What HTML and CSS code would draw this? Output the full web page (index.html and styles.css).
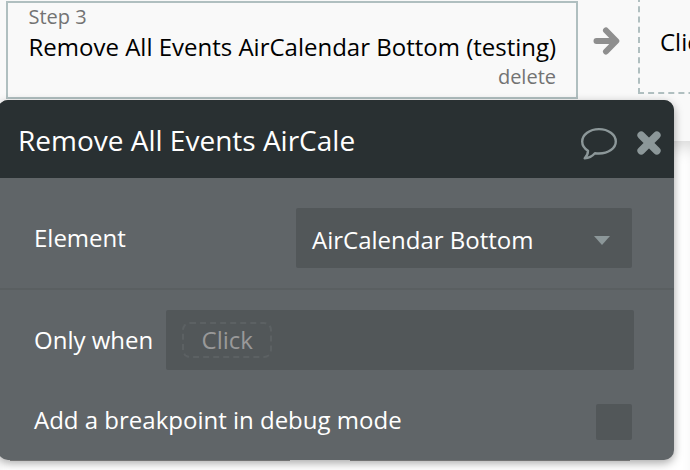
FILE: index.html
```
<!DOCTYPE html>
<html lang="en">

<head>
    <meta charset="UTF-8">
    <meta name="viewport" content="width=device-width, initial-scale=1.0">
    <title>Workflow</title>
    <link rel="stylesheet" href="styles.css">
</head>

<body>
    <div class="workflow">
        <div class="step">
            <div class="step-number">Step 3</div>
            <div class="step-name">Remove All Events AirCalendar Bottom (testing)</div>
            <div class="step-delete">delete</div>
        </div>
        <svg class="arrow" width="28" height="28" viewBox="0 0 28 28">
            <path d="M3.500 14H20M13 3.500L23.300 14L13 24.500" />
        </svg>
        <div class="next-step">Click</div>
    </div>

    <div class="canvas">
        <div class="block"></div>
        <div class="block"></div>
    </div>

    <!-- Property editor -->
    <div class="editor">
        <div class="editor-header">
            <h1>Remove All Events AirCale</h1>
            <svg class="comment" width="38" height="34" viewBox="0 0 38 34">
                <path d="M19 2.1C28.300 2.100 35.800 7.700 35.800 14.500C35.800 21.300 28.300 26.500 19 26.500C17.600 26.500 16.200 26.400 14.900 26.200C12.200 29.200 8.800 31 4.700 31.400C6.900 29.200 8 26.700 8 23.700C4.300 21.500 2.200 18.200 2.200 14.500C2.200 7.700 9.700 2.100 19 2.100Z" />
            </svg>
            <svg class="close" width="26" height="26" viewBox="0 0 26 26">
                <path d="M5.200 5.200L20.800 20.800M20.800 5.200L5.200 20.800" />
            </svg>
        </div>
        <div class="row row-element">
            <span class="label">Element</span>
            <div class="dropdown">
                <span class="value">AirCalendar Bottom</span>
                <div class="caret"></div>
            </div>
        </div>
        <div class="row row-condition">
            <span class="label">Only when</span>
            <div class="expression"><span class="placeholder">Click</span></div>
        </div>
        <div class="row row-debug">
            <span class="label">Add a breakpoint in debug mode</span>
            <div class="checkbox"></div>
        </div>
    </div>
</body>

</html>
```
FILE: styles.css
```
* {
    box-sizing: border-box;
}

body {
    margin: 0;
    height: 470px;
    overflow: hidden;
    position: relative;
    background: #fff;
    font-family: 'Open Sans', 'Noto Sans', sans-serif;
    font-size: 24px;
    color: #000;
}

.workflow {
    display: flex;
    align-items: flex-start;
    height: 141px;
    padding-left: 6px;
    overflow: hidden;
    background: #f9f9f9;
}

.step {
    flex: none;
    width: 572px;
    height: 98px;
    margin-top: 1px;
    padding: 0 20px 0 20.5px;
    border: 2px solid #b0bfc0;
    white-space: nowrap;
}

.step-number {
    font-size: 20px;
    line-height: 27px;
    color: #737373;
}

.step-name {
    line-height: 33px;
}

.step-delete {
    font-size: 20px;
    line-height: 27px;
    text-align: right;
    color: #737373;
}

.arrow {
    flex: none;
    margin: 27px 17px 0 15px;
    fill: none;
    stroke: #8f8f8f;
    stroke-width: 6;
    stroke-linecap: round;
    stroke-linejoin: round;
}

.next-step {
    flex: none;
    width: 420px;
    height: 98px;
    margin-top: -4px;
    padding-left: 20px;
    border: 2px dashed #b0bfc0;
    line-height: 88px;
}

.canvas {
    display: flex;
    gap: 60px;
    height: 329px;
    padding: 0 10px;
    box-shadow: inset 0 14px 16px -8px #d8d8d8;
}

.block {
    width: 280px;
    height: 320px;
    border-bottom: 1px solid #999;
}

.editor {
    position: absolute;
    left: -2px;
    top: 100px;
    width: 676px;
    height: 360px;
    border-radius: 10px;
    overflow: hidden;
    background: #606568;
    color: #fff;
    box-shadow: 0 3px 10px rgba(0, 0, 0, 0.35);
}

.editor-header {
    display: flex;
    align-items: center;
    height: 78px;
    padding: 0 12px 0 20px;
    background: #293032;
}

.editor-header h1 {
    flex: 1;
    margin: 0;
    font-size: 28px;
    font-weight: 400;
    line-height: 38px;
    padding-top: 2px;
}

.comment {
    margin: 10px 18px 0 0;
    fill: none;
    stroke: #8c9799;
    stroke-width: 2.4;
    stroke-linejoin: round;
}

.close {
    margin-top: 8px;
    fill: none;
    stroke: #8c9799;
    stroke-width: 7.6;
    stroke-linecap: round;
}

.row {
    display: flex;
    align-items: center;
    padding-left: 36px;
}

.row-element {
    justify-content: space-between;
    height: 112px;
    padding-top: 10px;
    padding-right: 42px;
    border-bottom: 2px solid #5a5f61;
}

.row-condition {
    height: 100px;
    gap: 13px;
}

.row-debug {
    justify-content: space-between;
    height: 64px;
    padding-right: 42px;
}

.label {
    padding-bottom: 2px;
}

.row-debug .label {
    padding-bottom: 6px;
}

.dropdown {
    display: flex;
    align-items: center;
    justify-content: space-between;
    width: 336px;
    height: 60px;
    padding: 4px 22px 0 16px;
    border-radius: 2px;
    background: #525759;
}

.value {
    padding-bottom: 2px;
}

.caret {
    border: 8px solid transparent;
    border-top: 9px solid #8c9799;
    border-bottom: 0;
}

.expression {
    display: flex;
    align-items: center;
    width: 468px;
    height: 60px;
    padding-left: 16px;
    border-radius: 2px;
    background: #525759;
}

.placeholder {
    width: 90px;
    height: 36px;
    border: 2px dashed #5c6163;
    border-radius: 8px;
    line-height: 32px;
    text-align: center;
    color: #999;
}

.checkbox {
    width: 36px;
    height: 36px;
    border-radius: 2px;
    background: #525759;
}
```
